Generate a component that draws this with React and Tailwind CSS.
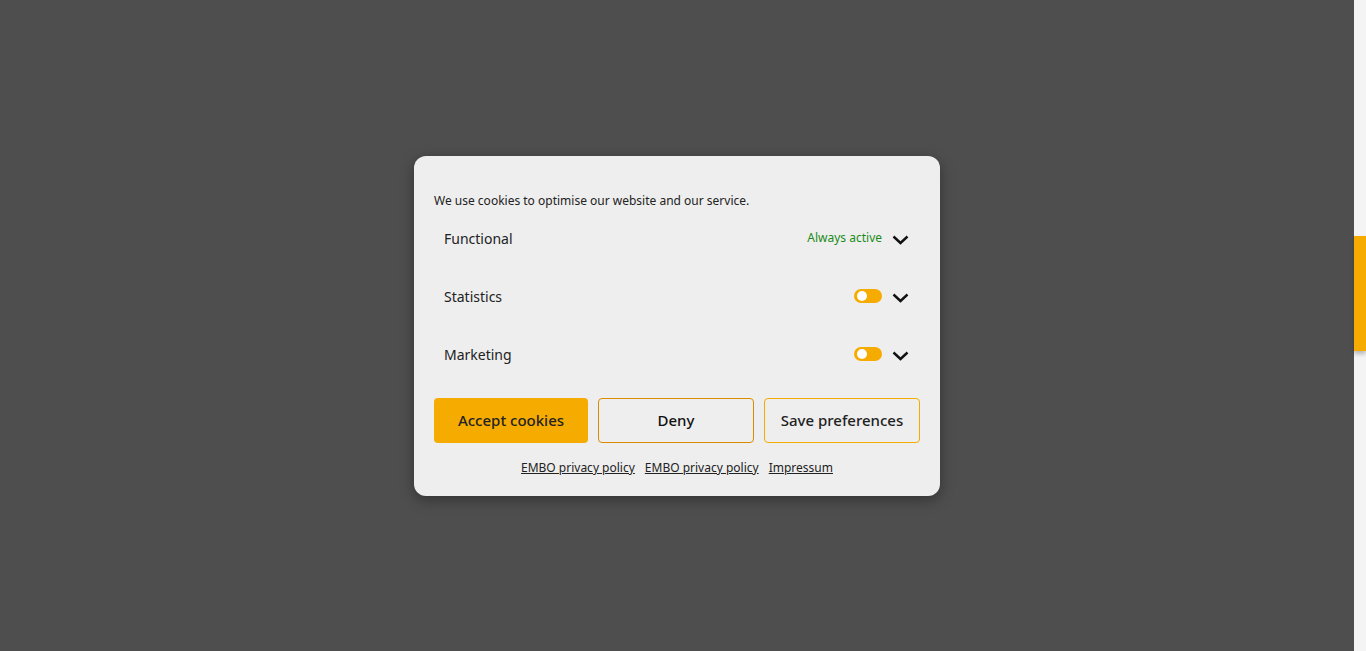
const categories = [
  { name: "Functional", always: true },
  { name: "Statistics" },
  { name: "Marketing" },
];

function Chevron() {
  return (
    <svg width="17" height="10" viewBox="0 0 17 10" className="shrink-0 mt-[4px]">
      <path d="M1.5 1.5 L8.5 8 L15.5 1.5" fill="none" stroke="#111" strokeWidth="2.4" />
    </svg>
  );
}

function Toggle() {
  return (
    <div className="w-[28px] h-[14px] rounded-full bg-[#f6ab00] flex items-center px-[3px]">
      <div className="w-[10px] h-[10px] rounded-full bg-white" />
    </div>
  );
}

export default function App() {
  return (
    <div className="w-[1366px] h-[651px] flex bg-[#4e4e4e] font-['Noto_Sans',sans-serif] overflow-hidden">
      <div className="flex-1 flex items-start justify-center pt-[156px]">
        <div className="w-[526px] bg-[#eeeeee] rounded-[12px] shadow-[0_4px_14px_rgba(0,0,0,0.35)] px-[20px] pt-[36px] pb-[18px]">
          <p className="text-[12px] leading-[17px] text-[#222]">
            We use cookies to optimise our website and our service.
          </p>
          <div>
            {categories.map((c) => (
              <div key={c.name} className="h-[58px] flex items-center justify-between pl-[10px] pr-[11px]">
                <span className="text-[14px] text-[#222]">{c.name}</span>
                <div className="flex items-center gap-[10px]">
                  {c.always ? (
                    <span className="text-[12px] text-[#1a8c1a]">Always active</span>
                  ) : (
                    <Toggle />
                  )}
                  <Chevron />
                </div>
              </div>
            ))}
          </div>
          <div className="flex gap-[10px] mt-[15px]">
            <button className="flex-1 h-[45px] rounded-[4px] bg-[#f6ab00] text-[15px] font-medium text-[#222]">
              Accept cookies
            </button>
            <button className="flex-1 h-[45px] rounded-[4px] border border-[#d98c00] text-[15px] font-medium text-[#111]">
              Deny
            </button>
            <button className="flex-1 h-[45px] rounded-[4px] border border-[#f6ab00] text-[15px] font-medium text-[#222]">
              Save preferences
            </button>
          </div>
          <div className="flex justify-center gap-[10px] mt-[15px] text-[12px] leading-[20px] text-[#222]">
            <a className="underline">EMBO privacy policy</a>
            <a className="underline">EMBO privacy policy</a>
            <a className="underline">Impressum</a>
          </div>
        </div>
      </div>
      <div className="w-[12px] h-full bg-[#f4f4f4] flex flex-col">
        <div className="h-[236px]" />
        <div className="h-[115px] bg-[#f6ab00] shadow-[0_3px_4px_rgba(0,0,0,0.25)]" />
      </div>
    </div>
  );
}
